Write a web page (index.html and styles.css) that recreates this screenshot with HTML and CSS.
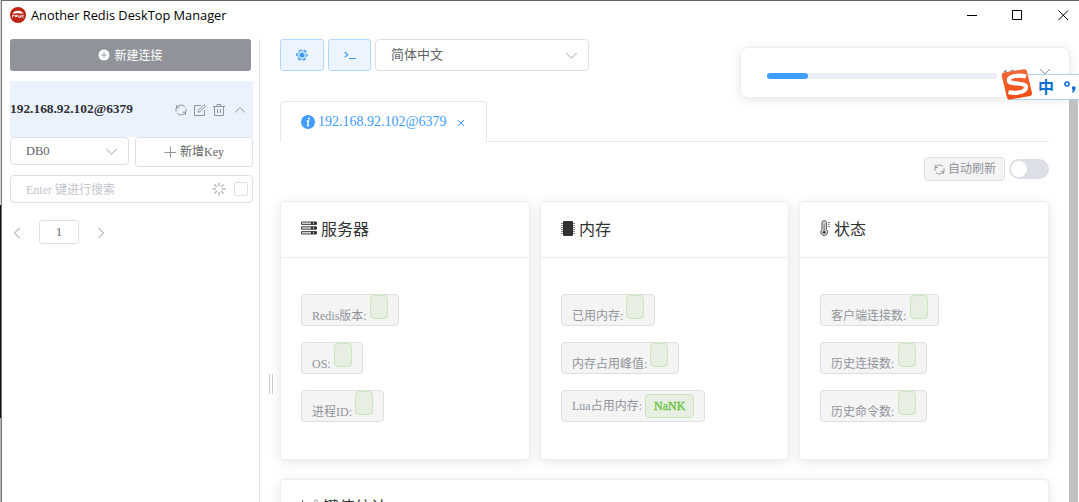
FILE: index.html
```html
<!DOCTYPE html>
<html lang="zh-CN">
<head>
    <meta charset="UTF-8">
    <meta name="viewport" content="width=device-width, initial-scale=1.0">
    <title>Another Redis DeskTop Manager</title>
    <link rel="stylesheet" href="styles.css">
</head>
<body>
    <svg class="sprite">
        <symbol id="down" viewBox="0 0 12 12"><path d="M1 3.5l5 5 5-5"/></symbol>
        <symbol id="refresh" viewBox="0 0 12 12"><path d="M1.200 7.500a5 5 0 0 1 3-6.100 5 5 0 0 1 5.600 1.300M10.800 4.500a5 5 0 0 1-3 6.100 5 5 0 0 1-5.600-1.300M1.500 1.200v2.600h2.800M10.500 10.800V8.200H7.700"/></symbol>
    </svg>

    <div class="window">
        <div class="titlebar">
            <svg class="app-logo" viewBox="0 0 16 16">
                <circle cx="8" cy="8" r="8" fill="#bd2414"/>
                <path d="M2.3 6.500C3.500 4.500 6 3.400 8.800 3.700c1.900.2 3.800 1.300 4.900 2.900H9l-1.500-.6-1.200.6z" fill="#fff"/>
                <path d="M2.500 10.500V8.300h1.800v1M5.600 10.300V8.300h1.700v1.200H6M8.800 8.300v2h1.600v-2M12 7.900v2.600M13.700 8.200L12.200 9.200l1.500 1.200" fill="none" stroke="#fff" stroke-width=".9"/>
            </svg>
            <span class="app-name">Another Redis DeskTop Manager</span>
            <svg class="win-buttons" viewBox="0 0 104 12">
                <path d="M0 5.5h10M45.5.5h9v9h-9zM91.500.5l9.500 9.500M101 .5l-9.500 9.500"/>
            </svg>
        </div>

        <div class="main">
            <div class="sidebar">
                <div class="new-conn">
                    <svg viewBox="0 0 12 12"><circle cx="6" cy="6" r="6" fill="#fff"/><path d="M3 6h6M6 3v6" stroke="#909399" stroke-width=".8"/></svg>
                    新建连接
                </div>
                <div class="conn">
                    <span class="conn-name">192.168.92.102@6379</span>
                    <svg class="icon" viewBox="0 0 12 12"><use href="#refresh"/></svg>
                    <svg class="icon" viewBox="0 0 12 12"><path d="M7 1.500H.5v10h10V6M4 8.200l.5-2L10 .7l1.500 1.400L6 7.800z"/></svg>
                    <svg class="icon" viewBox="0 0 12 12"><path d="M0 2.500h12M4 2.300V.5h4v1.800M1.500 2.600v8.900h9V2.600M4.500 5v4M7.500 5v4"/></svg>
                    <svg class="icon up" viewBox="0 0 12 12"><use href="#down"/></svg>
                </div>
                <div class="row">
                    <div class="select db">DB0<svg class="arrow" viewBox="0 0 12 12"><use href="#down"/></svg></div>
                    <div class="new-key"><svg viewBox="0 0 12 12"><path d="M6.500 .5v11M.5 6.500h12"/></svg><span>新增Key</span></div>
                </div>
                <div class="search">
                    <span>Enter 键进行搜索</span>
                    <svg viewBox="0 0 14 14"><path d="M7 .5v3.500M7 10v3.500M.5 7H4M10 7h3.500M2.500 2.500l2.400 2.400M9.100 9.100l2.400 2.400M2.500 11.500l2.400-2.400M9.100 4.900l2.400-2.400"/></svg>
                    <i class="checkbox"></i>
                </div>
                <div class="pager">
                    <svg viewBox="0 0 8 12"><path d="M6.500 1l-5 5 5 5"/></svg>
                    <span class="page">1</span>
                    <svg viewBox="0 0 8 12"><path d="M1.5 1l5 5-5 5"/></svg>
                </div>
            </div>

            <div class="resizer"><i></i></div>

            <div class="content">
                <div class="toolbar">
                    <div class="tool setting">
                        <svg viewBox="0 0 12 12"><circle cx="6" cy="6" r="2.600" fill="#409eff" stroke="none"/><circle cx="6" cy="6" r="4.300" stroke-width=".9"/><circle cx="6" cy="6" r="5.300" stroke-width="1.200" stroke-dasharray="2.800 2.750" stroke-dashoffset="1.400"/></svg>
                    </div>
                    <div class="tool">
                        <svg viewBox="0 0 12 12"><path d="M.7 3l3 2.700-3 2.700M5 9.500h7" stroke-width="1.200"/></svg>
                    </div>
                    <div class="select lang"><span>简体中文</span><svg class="arrow" viewBox="0 0 12 12"><use href="#down"/></svg></div>
                </div>

                <div class="tabs">
                    <div class="tab">
                        <svg class="info" viewBox="0 0 14 14"><circle cx="7" cy="7" r="7" fill="#409eff"/><circle cx="8" cy="3.500" r="1" fill="#fff"/><path d="M5.700 6h1.800l-1 4.600h1.600" fill="none" stroke="#fff" stroke-width="1.400"/></svg>
                        <span>192.168.92.102@6379</span>
                        <svg class="close" viewBox="0 0 8 8"><path d="M1 1l6 6M7 1L1 7"/></svg>
                    </div>
                </div>

                <div class="actions">
                    <span class="tag refresh-tag"><svg viewBox="0 0 12 12"><use href="#refresh"/></svg>自动刷新</span>
                    <span class="switch"></span>
                </div>

                <div class="cards">
                    <div class="card">
                        <div class="card-head">
                            <svg class="server" viewBox="0 0 16 14"><path d="M.5 1h15v2.400H.5zM.5 5.800h15v2.400H.5zM.5 10.600h15V13H.5z" fill="#ddd" stroke="#444"/><path d="M10 1h2v2.400h-2zM13 1h2v2.400h-2zM10 5.800h2v2.400h-2zM13 5.800h2v2.400h-2zM10 10.600h2V13h-2zM13 10.600h2V13h-2z" fill="#303133" stroke="none"/></svg>
                            服务器
                        </div>
                        <div class="card-body">
                            <div class="tag">Redis版本:<b></b></div>
                            <div class="tag">OS:<b></b></div>
                            <div class="tag">进程ID:<b></b></div>
                        </div>
                    </div>
                    <div class="card">
                        <div class="card-head">
                            <svg class="chip" viewBox="0 0 14 15"><path d="M0 2.500h14M0 4.500h14M0 6.500h14M0 8.500h14M0 10.500h14M0 12.500h14" stroke="#888"/><rect x="2" width="10" height="15" rx="1" fill="#303133" stroke="none"/></svg>
                            内存
                        </div>
                        <div class="card-body">
                            <div class="tag">已用内存:<b></b></div>
                            <div class="tag">内存占用峰值:<b></b></div>
                            <div class="tag filled">Lua占用内存:<b>NaNK</b></div>
                        </div>
                    </div>
                    <div class="card">
                        <div class="card-head">
                            <svg class="thermo" viewBox="0 0 10 16"><path d="M2 9.500V2.800a2.200 2.200 0 0 1 4.400 0v6.700a3.400 3.400 0 1 1-4.400 0z" fill="#ddd" stroke="#555"/><path d="M4.200 3.500V12M8 2.500h2M8 4.500h1.500M8 6.500h2" stroke="#777"/><circle cx="4.200" cy="12.300" r="1.400" fill="#303133" stroke="none"/></svg>
                            状态
                        </div>
                        <div class="card-body state">
                            <div class="tag">客户端连接数:<b></b></div>
                            <div class="tag">历史连接数:<b></b></div>
                            <div class="tag">历史命令数:<b></b></div>
                        </div>
                    </div>
                </div>

                <div class="card stats">
                    <div class="card-head">
                        <svg class="chart" viewBox="0 0 18 16"><path d="M1.500 2v13H18M4 11l5-5 3 3 4-4" fill="none" stroke="#666"/><circle cx="15" cy="3.500" r="1.500" stroke="#999"/></svg>
                        键值统计
                    </div>
                </div>
            </div>
            <div class="scrollbar"></div>
        </div>
    </div>

    <div class="notify">
        <div class="progress"><i style="width: 18%"></i></div>
        <span>18%</span>
        <svg viewBox="0 0 12 12"><path d="M1 1l10 10M11 1L1 11"/></svg>
    </div>

    <div class="ime">
        <svg class="sogou" viewBox="0 0 32 31">
            <defs><linearGradient id="og" x2="0" y2="1"><stop offset="0" stop-color="#f4683a"/><stop offset="1" stop-color="#f04a10"/></linearGradient></defs>
            <path d="M3 3.500L23 .3q2.500-.3 3 2L31 24q.4 2.500-2 3L9 30.500q-2.500.3-3-2L.8 7Q.3 4 3 3.500z" fill="url(#og)"/>
            <path d="M25 7.500C18 5.500 7.500 7 7.800 11.500c.4 4.500 17.200 1.500 17.200 6.500 0 5.500-11 7-17.500 5" fill="none" stroke="#fff" stroke-width="4.200"/>
        </svg>
        <span class="zh">中</span>
        <svg class="punct" viewBox="0 0 12 12"><circle cx="3" cy="3" r="2" fill="none" stroke="#0a6ed1" stroke-width="1.600"/><path d="M8 5.500h3.500v2.600L9.600 11.500H8l1-3H8z" fill="#0a6ed1"/></svg>
    </div>
</body>
</html>
```
FILE: styles.css
```css
* {
    box-sizing: border-box;
}
body {
    margin: 0;
    height: 502px;
    overflow: hidden;
    position: relative;
    font-family: "Liberation Serif", "Noto Sans CJK SC", serif;
    font-size: 12px;
    color: #606266;
    /* desktop behind the window, seen on the left edge */
    background: linear-gradient(#cfd4d8 0 205px, #0b0c10 205px 418px, #b5b5b5 418px);
}
svg {
    flex: none;
    fill: none;
    stroke: #909399;
}
.sprite {
    position: absolute;
    width: 0;
    height: 0;
}
.window {
    height: 502px;
    margin-left: 1px;
    background: #fff;
    border-top: 1px solid #666;
    border-left: 1px solid #777;
    overflow: hidden;
}
.titlebar {
    height: 38px;
    padding: 6px 9px 0 8px;
    display: flex;
    align-items: flex-start;
}
.app-logo {
    width: 16px;
    height: 16px;
    stroke: none;
}
.app-name {
    margin-left: 5px;
    flex: 1;
    font: 12.8px/17px "Open Sans", sans-serif;
    color: #000;
}
.win-buttons {
    width: 104px;
    height: 12px;
    margin: 3px -1px 0 0;
    stroke: #000;
}
.main {
    display: flex;
    height: 463px;
}

/* sidebar */
.sidebar {
    width: 258px;
    padding: 0 6px 0 8px;
    border-right: 1px solid #dcdfe6;
}
.new-conn {
    width: 241px;
    height: 32px;
    border-radius: 3px;
    background: #909399;
    color: #fff;
    display: flex;
    align-items: center;
    justify-content: center;
    gap: 4px;
}
.new-conn svg {
    width: 12px;
    height: 12px;
}
.conn {
    width: 243px;
    height: 56px;
    margin-top: 10px;
    padding-right: 7px;
    background: #eaf2fe;
    display: flex;
    align-items: center;
    gap: 7px;
}
.conn-name {
    flex: 1;
    font-size: 13.4px;
    font-weight: bold;
    color: #303133;
}
.icon {
    width: 12px;
    height: 12px;
    margin-top: 2px;
}
.up {
    transform: rotate(180deg);
    margin-left: 2px;
}
.row {
    display: flex;
    gap: 6px;
}
.select {
    border: 1px solid #dcdfe6;
    border-radius: 4px;
    background: #fff;
    padding: 0 10px 0 15px;
    display: flex;
    align-items: center;
    justify-content: space-between;
}
.arrow {
    width: 13px;
    height: 13px;
    stroke: #c0c4cc;
}
.db {
    width: 119px;
    height: 28px;
    font-size: 12.5px;
}
.new-key {
    width: 118px;
    height: 30px;
    border: 1px solid #dcdfe6;
    border-radius: 3px;
    display: flex;
    align-items: center;
    justify-content: center;
    gap: 4px;
}
.new-key span {
    margin-top: -2px;
}
.new-key svg {
    width: 12px;
    height: 12px;
}
.search {
    width: 243px;
    height: 28px;
    margin-top: 8px;
    padding: 0 4px 0 15px;
    border: 1px solid #dcdfe6;
    border-radius: 4px;
    display: flex;
    align-items: center;
    color: #c0c4cc;
}
.search span {
    flex: 1;
}
.search svg {
    width: 14px;
    height: 14px;
    stroke: #b4b4b6;
    stroke-width: 1.4;
}
.checkbox {
    width: 14px;
    height: 14px;
    margin-left: 8px;
    border: 1px solid #dcdfe6;
    border-radius: 2px;
}
.pager {
    margin-top: 17px;
    padding-left: 3px;
    display: flex;
    align-items: center;
    gap: 18px;
}
.pager svg {
    width: 8px;
    height: 12px;
    margin-top: 2px;
}
.page {
    width: 40px;
    height: 24px;
    line-height: 22px;
    text-align: center;
    border: 1px solid #dcdfe6;
    border-radius: 3px;
}
.resizer {
    width: 20px;
    padding: 335px 0 0 9px;
}
.resizer i {
    display: block;
    width: 4px;
    height: 20px;
    border: 1px solid #ccc;
    border-width: 0 1px;
}

/* content */
.content {
    width: 769px;
    flex: none;
}
.toolbar {
    display: flex;
    gap: 4px;
}
.tool {
    width: 43px;
    height: 32px;
    background: #ecf5ff;
    border: 1px solid #b3d8ff;
    border-radius: 3px;
    display: flex;
    align-items: center;
    justify-content: center;
}
.setting {
    width: 44px;
}
.tool svg {
    width: 12px;
    height: 12px;
    stroke: #409eff;
}
.lang {
    width: 214px;
    height: 32px;
    font-size: 13px;
}
.lang span {
    margin-top: -3px;
}
.tabs {
    height: 41px;
    margin-top: 30px;
    border-bottom: 1px solid #e4e7ed;
}
.tab {
    width: 207px;
    height: 41px;
    padding-left: 20px;
    background: #fff;
    border: 1px solid #e4e7ed;
    border-bottom: 0;
    border-radius: 4px 4px 0 0;
    display: flex;
    align-items: center;
    font-size: 14px;
    color: #409eff;
}
.info {
    width: 14px;
    height: 14px;
    margin: -1px 3px 0 0;
    stroke: none;
}
.close {
    width: 8px;
    height: 8px;
    margin: 2px 0 0 11px;
    stroke: #409eff;
}
.actions {
    display: flex;
    align-items: center;
    justify-content: flex-end;
    gap: 4px;
    margin-top: 15px;
}
.tag {
    width: max-content;
    height: 32px;
    padding: 0 10px;
    border: 1px solid #dedfe1;
    border-radius: 4px;
    background: #f4f4f5;
    color: #909399;
    line-height: 42px;
    display: flex;
    margin-bottom: 16px;
}
.tag b {
    min-width: 18px;
    height: 24px;
    padding: 0 8px;
    margin-left: 3px;
    border: 1px solid #c9e7b9;
    border-radius: 4px;
    background: #e7eee2;
    color: #67c23a;
    font-weight: normal;
    -webkit-text-stroke: 0.3px #67c23a;
    line-height: 22px;
}
.state .tag b {
    margin-left: 4px;
}
.filled {
    line-height: 31px;
}
.filled b {
    margin-top: 3px;
}
.refresh-tag {
    width: 81px;
    height: 24px;
    margin: 0;
    padding: 0 8px 0 9px;
    line-height: 24px;
    align-items: center;
    justify-content: space-between;
}
.refresh-tag svg {
    width: 11px;
    height: 11px;
}
.switch {
    width: 40px;
    height: 20px;
    padding: 2px;
    border-radius: 10px;
    background: #dcdfe6;
}
.switch::before {
    content: "";
    display: block;
    width: 16px;
    height: 16px;
    border-radius: 50%;
    background: #fff;
}
.cards {
    display: grid;
    grid-template-columns: 250px 249px 250px;
    gap: 10px;
    margin-top: 20px;
}
.card {
    height: 259px;
    border: 1px solid #ebeef5;
    border-radius: 4px;
    background: #fff;
    box-shadow: 0 2px 12px rgba(0, 0, 0, 0.1);
}
.card-head {
    height: 56px;
    padding: 0 0 3px 20px;
    border-bottom: 1px solid #ebeef5;
    display: flex;
    align-items: center;
    gap: 4px;
    font-size: 16px;
    color: #303133;
}
.card-body {
    padding: 36px 20px 0;
}
.server {
    width: 16px;
    height: 14px;
}
.chip {
    width: 14px;
    height: 15px;
}
.thermo {
    width: 10px;
    height: 16px;
}
.chart {
    width: 18px;
    height: 16px;
}
.stats {
    margin-top: 19px;
}
.scrollbar {
    width: 9px;
    margin: 53px 0 0 20px;
    background: #c1c1c1;
}

/* floating layers */
.notify {
    position: absolute;
    left: 740px;
    top: 47px;
    width: 330px;
    height: 51px;
    padding: 7px 18px 0 26px;
    border: 1px solid #ebeef5;
    border-radius: 8px;
    background: #fff;
    box-shadow: 0 2px 12px rgba(0, 0, 0, 0.1);
    display: flex;
    align-items: center;
    font-size: 14px;
}
.notify span {
    flex: 1;
    margin: -1px 0 0 5px;
}
.notify svg {
    width: 12px;
    height: 12px;
    margin-top: -4px;
}
.progress {
    width: 230px;
    height: 6px;
    border-radius: 3px;
    background: #ebeef5;
}
.progress i {
    display: block;
    height: 6px;
    border-radius: 3px;
    background: #409eff;
}
.ime {
    position: absolute;
    left: 1008px;
    top: 74px;
    width: 80px;
    height: 26px;
    border: 1px solid #b4cfe8;
    background: #fff;
    display: flex;
    align-items: center;
}
.sogou {
    width: 32px;
    height: 31px;
    margin: -5px 0 0 -8px;
    stroke: none;
}
.zh {
    margin: -2px 0 0 5px;
    font: bold 16px/24px "Noto Sans CJK SC", sans-serif;
    color: #0a6ed1;
}
.punct {
    width: 12px;
    height: 12px;
    margin-left: 10px;
    stroke: none;
}
```
